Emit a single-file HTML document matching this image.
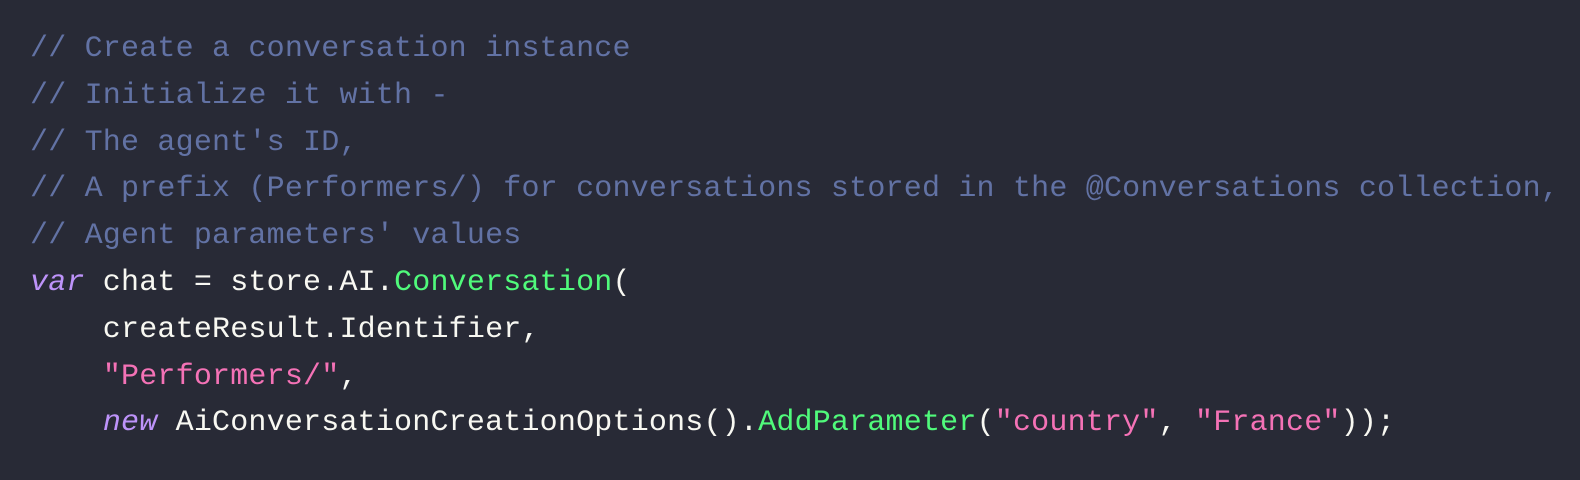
<!DOCTYPE html>
<html><head><meta charset="utf-8"><style>
html,body{margin:0;padding:0;background:#282a36;width:1580px;height:480px;overflow:hidden}
pre{margin:0;position:absolute;left:30px;top:26px;font-family:"Liberation Mono","DejaVu Sans Mono",monospace;font-size:30px;line-height:46.8px;color:#f8f8f2;letter-spacing:0.2px}
.c{color:#6272a4}.k{color:#bd93f9;font-style:italic}.s{color:#f472b6}.f{color:#50fa7b}
</style></head><body><pre><span class="c">// Create a conversation instance</span>
<span class="c">// Initialize it with -</span>
<span class="c">// The agent's ID,</span>
<span class="c">// A prefix (Performers/) for conversations stored in the @Conversations collection,</span>
<span class="c">// Agent parameters' values</span>
<span class="k">var</span> chat = store.AI.<span class="f">Conversation</span>(
    createResult.Identifier,
    <span class="s">"Performers/"</span>,
    <span class="k">new</span> AiConversationCreationOptions().<span class="f">AddParameter</span>(<span class="s">"country"</span>, <span class="s">"France"</span>));</pre></body></html>
